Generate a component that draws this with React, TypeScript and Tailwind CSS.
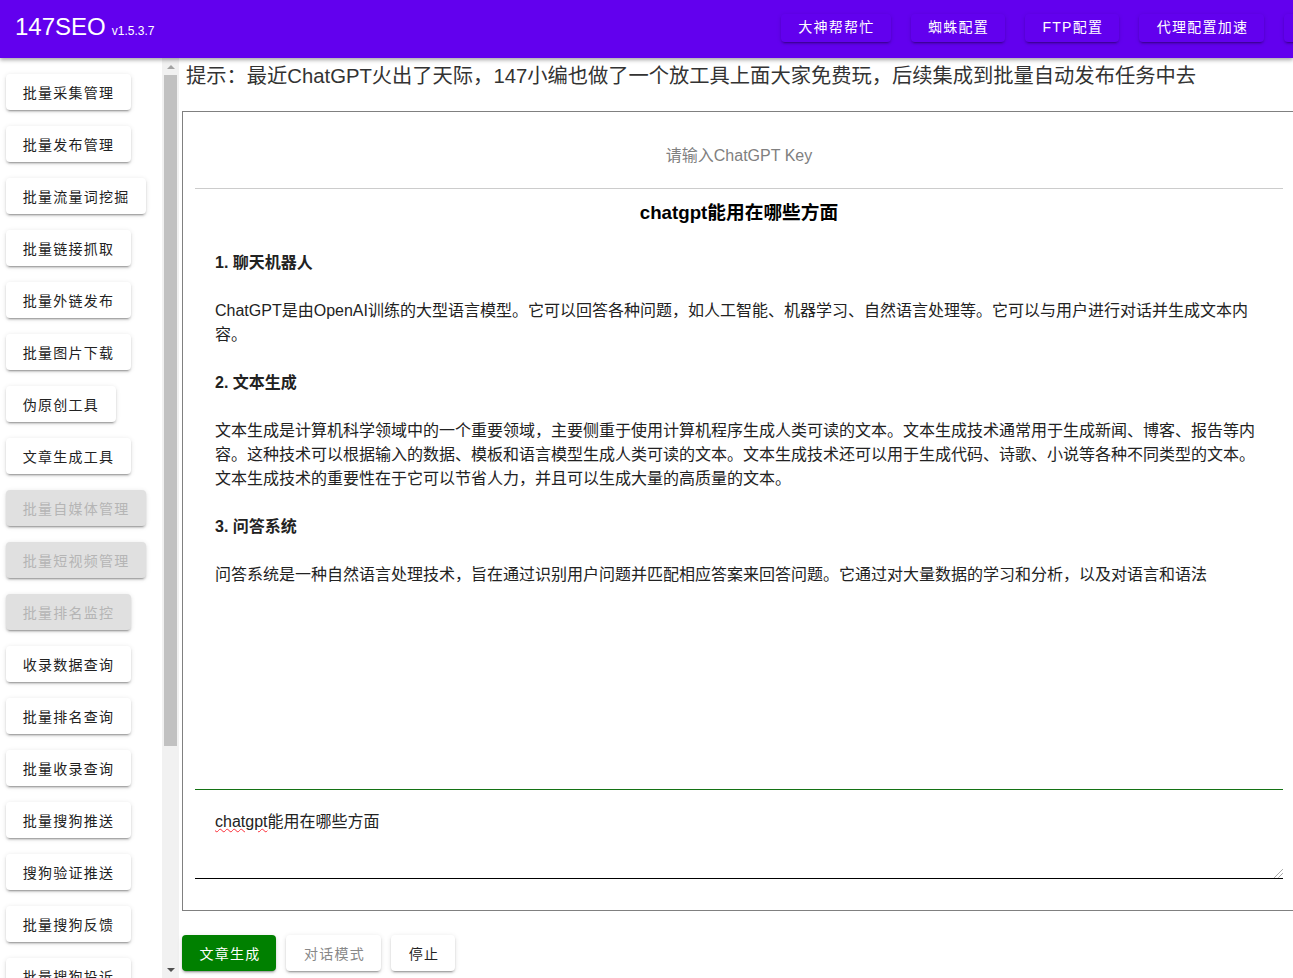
import React from "react";

const FONT = "font-['Liberation_Sans','Noto_Sans_CJK_SC',sans-serif]";

const side: [string, boolean?][] = [
  ["批量采集管理"], ["批量发布管理"], ["批量流量词挖掘"], ["批量链接抓取"], ["批量外链发布"], ["批量图片下载"],
  ["伪原创工具"], ["文章生成工具"], ["批量自媒体管理", true], ["批量短视频管理", true], ["批量排名监控", true],
  ["收录数据查询"], ["批量排名查询"], ["批量收录查询"], ["批量搜狗推送"], ["搜狗验证推送"], ["批量搜狗反馈"], ["批量搜狗投诉"],
];

const shadow = "shadow-[0_3px_1px_-2px_rgba(0,0,0,0.2),0_2px_2px_0_rgba(0,0,0,0.14),0_1px_5px_0_rgba(0,0,0,0.12)]";

function TopBtn({ label }: { label: string }) {
  return (
    <button className={`h-[28px] min-w-[64px] shrink-0 rounded bg-[#6200ee] pr-[16.25px] pl-[17.25px] text-center text-[14px] tracking-[1.25px] whitespace-nowrap text-white ${shadow}`}>
      {label}
    </button>
  );
}

function SideBtn({ label, disabled }: { label: string; disabled?: boolean }) {
  return (
    <button
      className={`h-9 shrink-0 self-start rounded px-[16.75px] pt-[2px] text-[14px] tracking-[1.25px] whitespace-nowrap ${shadow} ${
        disabled ? "bg-[#e0e0e0] text-[#b5b5b5]" : "bg-white text-[#222]"
      }`}
    >
      {label}
    </button>
  );
}

export default function App() {
  return (
    <div className={`${FONT} flex h-[978px] w-[1293px] flex-col overflow-hidden bg-white text-[#222]`}>
      <header className="z-10 flex h-[58px] shrink-0 items-center bg-[#6200ee] pl-[15px] shadow-[0_2px_4px_rgba(0,0,0,0.35)]">
        <div className="mb-1 flex w-[766px] shrink-0 items-baseline text-white">
          <span className="text-[24px]">147SEO</span>
          <span className="ml-[6px] text-[12px]">v1.5.3.7</span>
        </div>
        <div className="mb-[3px] flex gap-5">
          <TopBtn label="大神帮帮忙" />
          <TopBtn label="蜘蛛配置" />
          <TopBtn label="FTP配置" />
          <TopBtn label="代理配置加速" />
          <TopBtn label="" />
        </div>
      </header>

      <div className="flex min-h-0 flex-1">
        <aside className="flex w-[162px] shrink-0 flex-col gap-4 overflow-hidden pt-4 pl-[6px]">
          {side.map(([l, d]) => (
            <SideBtn key={l} label={l} disabled={d} />
          ))}
        </aside>

        <div className="flex w-[17px] shrink-0 flex-col items-center bg-[#f1f1f1] px-[2px]">
          <div className="flex h-[17px] w-full shrink-0 items-center justify-center">
            <div className="h-0 w-0 border-x-[4px] border-b-[4px] border-x-transparent border-b-[#a3a3a3]" />
          </div>
          <div className="h-[671px] w-full shrink-0 bg-[#c1c1c1]" />
          <div className="flex-1" />
          <div className="flex h-[17px] w-full shrink-0 items-center justify-center">
            <div className="h-0 w-0 border-x-[4px] border-t-[4px] border-x-transparent border-t-[#505050]" />
          </div>
        </div>

        <main className="flex min-w-0 flex-1 flex-col pl-[3px]">
          <div className="h-[53px] shrink-0 pl-1 text-[20.28px] leading-[36px] whitespace-nowrap text-[#333]">
            提示：最近ChatGPT火出了天际，147小编也做了一个放工具上面大家免费玩，后续集成到批量自动发布任务中去
          </div>

          <section className="flex h-[800px] w-[1114px] shrink-0 flex-col border border-[#808080] px-3">
            <div className="flex h-[77px] shrink-0 items-center justify-center border-b border-[#ccc] pt-[11px] text-[16px] text-[#808080]">
              请输入ChatGPT Key
            </div>
            <div className="h-[600px] shrink-0 px-5 text-[16px] leading-6">
              <h2 className="mt-[11px] text-center text-[18.72px] leading-[26px] font-bold text-black">chatgpt能用在哪些方面</h2>
              <p className="mt-[25px] font-bold">1. 聊天机器人</p>
              <p className="mt-6">
                ChatGPT是由OpenAI训练的大型语言模型。它可以回答各种问题，如人工智能、机器学习、自然语言处理等。它可以与用户进行对话并生成文本内容。
              </p>
              <p className="mt-6 font-bold">2. 文本生成</p>
              <p className="mt-6">
                文本生成是计算机科学领域中的一个重要领域，主要侧重于使用计算机程序生成人类可读的文本。文本生成技术通常用于生成新闻、博客、报告等内容。这种技术可以根据输入的数据、模板和语言模型生成人类可读的文本。文本生成技术还可以用于生成代码、诗歌、小说等各种不同类型的文本。文本生成技术的重要性在于它可以节省人力，并且可以生成大量的高质量的文本。
              </p>
              <p className="mt-6 font-bold">3. 问答系统</p>
              <p className="mt-6">
                问答系统是一种自然语言处理技术，旨在通过识别用户问题并匹配相应答案来回答问题。它通过对大量数据的学习和分析，以及对语言和语法
              </p>
            </div>
            <div className="flex h-[90px] shrink-0 flex-col justify-between border-t border-b border-t-[#147214] border-b-black pt-5 pl-5 text-[16px] leading-6">
              <div>
                <span className="underline decoration-red-500 decoration-wavy decoration-1">chatgpt</span>能用在哪些方面
              </div>
              <div className="flex justify-end">
                <svg width="9" height="9" viewBox="0 0 9 9" className="block">
                  <path d="M8.5 0.5 L0.5 8.5 M8.5 4.5 L4.5 8.5" stroke="#666" strokeWidth="1" fill="none" strokeDasharray="1 0.5" />
                </svg>
              </div>
            </div>
          </section>

          <div className="mt-6 flex gap-[10px]">
            <button className={`h-9 w-[94px] rounded bg-[#008000] pt-[2px] pl-[2px] text-[14px] tracking-[1.25px] text-white ${shadow}`}>文章生成</button>
            <button className={`h-9 w-[95px] rounded bg-white pt-[2px] pl-[2px] text-[14px] tracking-[1.25px] text-[#888] ${shadow}`}>对话模式</button>
            <button className={`h-9 w-[64px] rounded bg-white pt-[2px] pl-[2px] text-[14px] tracking-[1.25px] text-[#222] ${shadow}`}>停止</button>
          </div>
        </main>
      </div>
    </div>
  );
}
